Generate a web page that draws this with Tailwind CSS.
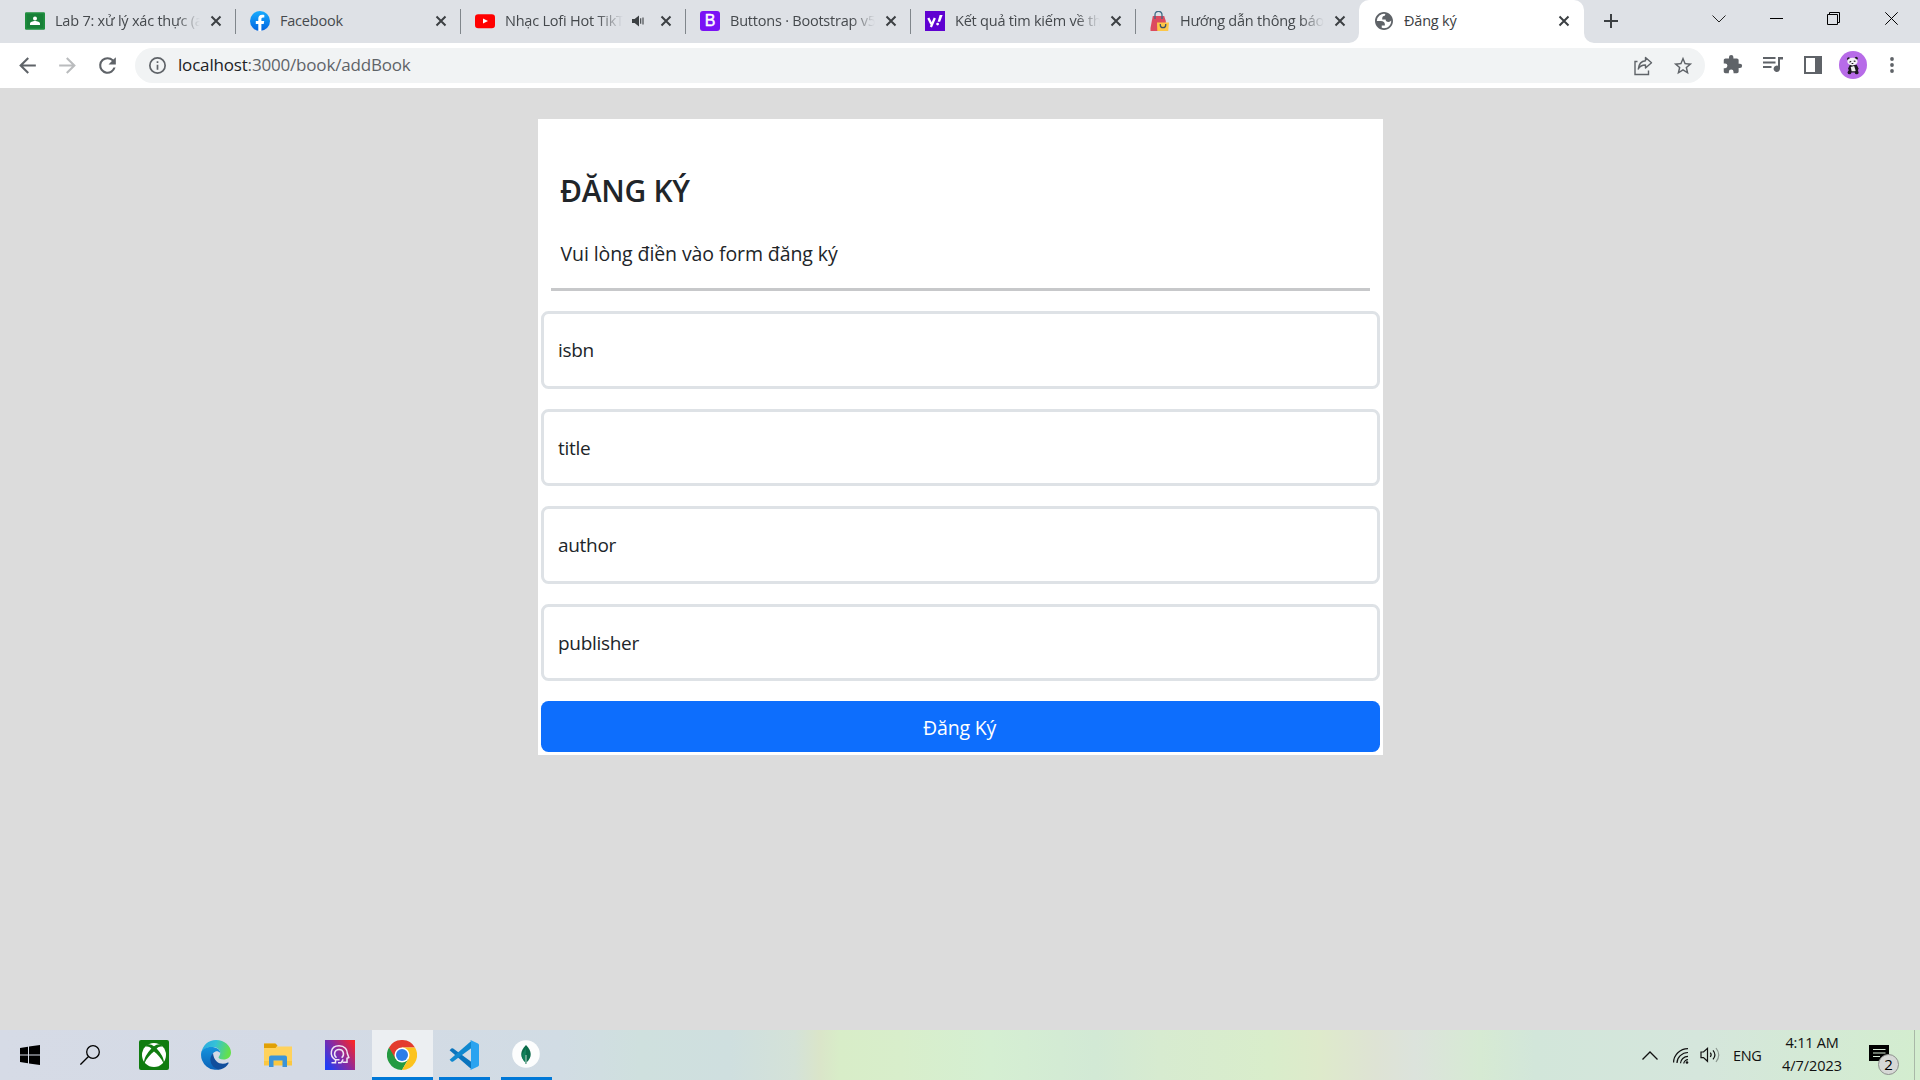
<!DOCTYPE html>
<html lang="vi">
<head>
<meta charset="utf-8">
<title>Đăng ký</title>
<script src="https://cdn.jsdelivr.net/npm/@tailwindcss/browser@4"></script>
</head>
<body class="w-[1920px] h-[1080px] overflow-hidden flex flex-col bg-[#dcdcdc] font-['Open_Sans','Noto_Sans',sans-serif]">

<svg class="hidden">
  <symbol id="x" viewBox="0 0 12 12"><path d="M1.5 1.5l9 9M10.5 1.5l-9 9" stroke="#3c4043" stroke-width="2" fill="none"/></symbol>
</svg>

<!-- Tab strip -->
<header class="h-[43px] shrink-0 bg-[#dee1e6] flex pl-2.5 text-[14.5px] leading-5 tracking-[-0.22px] text-[#45494d]">
  <div class="w-[225px] h-full flex items-center pb-px pl-[15px] pr-[16px] relative shrink-0">
    <svg class="w-5 h-5 shrink-0" viewBox="0 0 20 20"><rect y="1.2" width="20" height="17.6" rx="1.2" fill="#1e8e3e"/><rect x="1.8" y="3" width="16.4" height="14" fill="#188038"/><circle cx="10" cy="7.6" r="2" fill="#fff"/><path d="M5 14v-1.2c0-1.8 2.8-2.7 5-2.7s5 .9 5 2.7V14z" fill="#fff"/></svg>
    <span class="ml-2.5 mt-[-1px] flex-1 overflow-hidden whitespace-nowrap [mask-image:linear-gradient(to_right,black_84%,transparent)]">Lab 7: xử lý xác thực (a</span>
    <svg class="w-3 h-3 ml-2.5 mr-[-3px] shrink-0"><use href="#x"/></svg>
    <i class="absolute right-[-1px] top-[9px] w-px h-[25px] bg-[#80868b]"></i>
  </div>
  <div class="w-[225px] h-full flex items-center pb-px pl-[15px] pr-[16px] relative shrink-0">
    <svg class="w-5 h-5 shrink-0" viewBox="0 0 20 20"><defs><linearGradient id="fb" x2="0" y2="1"><stop stop-color="#18acfe"/><stop offset="1" stop-color="#0163e0"/></linearGradient></defs><circle cx="10" cy="10" r="10" fill="url(#fb)"/><path d="M13.7 12.9l.5-2.9h-2.8V8.1c0-.8.4-1.6 1.6-1.6h1.3V4s-1.1-.2-2.2-.2c-2.3 0-3.8 1.4-3.8 3.9V10H5.8v2.9h2.5v7a10 10 0 0 0 3.1 0v-7z" fill="#fff"/></svg>
    <span class="ml-2.5 mt-[-1px] flex-1 overflow-hidden whitespace-nowrap">Facebook</span>
    <svg class="w-3 h-3 ml-2.5 mr-[-3px] shrink-0"><use href="#x"/></svg>
    <i class="absolute right-[-1px] top-[9px] w-px h-[25px] bg-[#80868b]"></i>
  </div>
  <div class="w-[225px] h-full flex items-center pb-px pl-[15px] pr-[16px] relative shrink-0">
    <svg class="w-5 h-5 shrink-0" viewBox="0 0 20 20"><rect y="3.2" width="20" height="14" rx="3.2" fill="#f00"/><path d="M8 7.4v5.2l5-2.6z" fill="#fff"/></svg>
    <span class="ml-2.5 mt-[-1px] flex-1 overflow-hidden whitespace-nowrap [mask-image:linear-gradient(to_right,black_78%,transparent)]">Nhạc Lofi Hot TikT</span>
    <svg class="w-3.5 h-3 ml-2 shrink-0" viewBox="0 0 14 12"><path d="M1 4h2.600L8 .6v10.800L3.600 8H1z" fill="#3c4043"/><path d="M9.700 3.200v5.600M12 2.500v7" stroke="#3c4043" stroke-width="1.100"/></svg>
    <svg class="w-3 h-3 ml-[15px] mr-[-3px] shrink-0"><use href="#x"/></svg>
    <i class="absolute right-[-1px] top-[9px] w-px h-[25px] bg-[#80868b]"></i>
  </div>
  <div class="w-[225px] h-full flex items-center pb-px pl-[15px] pr-[16px] relative shrink-0">
    <span class="w-5 h-5 shrink-0 rounded-[3px] bg-[#7a12f5] text-white text-[16px] leading-5 text-center tracking-normal font-[Liberation_Sans,sans-serif] [-webkit-text-stroke:0.4px_white]">B</span>
    <span class="ml-2.5 mt-[-1px] flex-1 overflow-hidden whitespace-nowrap [mask-image:linear-gradient(to_right,black_84%,transparent)]">Buttons · Bootstrap v5</span>
    <svg class="w-3 h-3 ml-2.5 mr-[-3px] shrink-0"><use href="#x"/></svg>
    <i class="absolute right-[-1px] top-[9px] w-px h-[25px] bg-[#80868b]"></i>
  </div>
  <div class="w-[225px] h-full flex items-center pb-px pl-[15px] pr-[16px] relative shrink-0">
    <svg class="w-5 h-5 shrink-0" viewBox="0 0 20 20"><rect width="20" height="20" fill="#5f01d1"/><path d="M3.300 7l3 6M9.800 7L5.900 16" stroke="#fff" stroke-width="2.300" fill="none"/><path d="M12.700 10.800h2.500L17.600 4h-3z" fill="#fff"/><circle cx="12.600" cy="13.100" r="1.400" fill="#fff"/></svg>
    <span class="ml-2.5 mt-[-1px] flex-1 overflow-hidden whitespace-nowrap [mask-image:linear-gradient(to_right,black_84%,transparent)]">Kết quả tìm kiếm về th</span>
    <svg class="w-3 h-3 ml-2.5 mr-[-3px] shrink-0"><use href="#x"/></svg>
    <i class="absolute right-[-1px] top-[9px] w-px h-[25px] bg-[#80868b]"></i>
  </div>
  <div class="w-[224px] h-full flex items-center pb-px pl-[15px] pr-[16px] shrink-0">
    <svg class="w-5 h-5 shrink-0" viewBox="0 0 20 20"><path d="M2.800 5h11.400l1.600 5v10H.5v-3z" fill="#dc4a5f"/><path d="M5 8V3.800a3.500 3.500 0 0 1 7 0V8" stroke="#3f6b85" stroke-width="1.300" fill="none"/><path d="M7 11.500h12l-.8 8.500H7.300z" fill="#fdc748"/><path d="M10.300 13v1a2.700 2.700 0 0 0 5.400 0v-1" stroke="#3f5266" stroke-width="1.300" fill="none"/></svg>
    <span class="ml-2.5 mt-[-1px] flex-1 overflow-hidden whitespace-nowrap [mask-image:linear-gradient(to_right,black_84%,transparent)]">Hướng dẫn thông báo</span>
    <svg class="w-3 h-3 ml-2.5 mr-[-3px] shrink-0"><use href="#x"/></svg>
  </div>
  <div class="w-[225px] h-full flex items-center pb-px pl-[16px] pr-[17px] relative shrink-0 bg-white rounded-t-[10px] text-[#3c4043]">
    <svg class="absolute left-[-10px] bottom-0 w-2.5 h-2.5" viewBox="0 0 10 10"><path d="M10 0v10H0A10 10 0 0 0 10 0" fill="#fff"/></svg>
    <svg class="absolute right-[-10px] bottom-0 w-2.5 h-2.5" viewBox="0 0 10 10"><path d="M0 0v10h10A10 10 0 0 1 0 0" fill="#fff"/></svg>
    <svg class="w-[18px] h-[18px] shrink-0" viewBox="2 2 20 20"><path fill="#5f6368" fill-rule="evenodd" d="M12 2C6.480 2 2 6.480 2 12s4.480 10 10 10 10-4.480 10-10S17.520 2 12 2zM4 12h4.400c3.407.022 4.922 1.730 4.543 5.127H9.488v2.470a8.004 8.004 0 0 0 10.498-8.083C19.327 12.504 18.332 13 17 13c-2.137 0-3.206-.916-3.206-2.750h-3.748c-.274-2.728.683-4.092 2.870-4.092 0-.975.327-1.597.811-1.970A8.004 8.004 0 0 0 4 12z"/></svg>
    <span class="ml-[11px] mt-[-1px] flex-1 overflow-hidden whitespace-nowrap">Đăng ký</span>
    <svg class="w-3 h-3 ml-2.5 mr-[-3px] shrink-0"><use href="#x"/></svg>
  </div>
  <svg class="w-4 h-4 ml-[19px] mt-[13px] shrink-0" viewBox="0 0 16 16"><path d="M8 1v14M1 8h14" stroke="#3c4043" stroke-width="2"/></svg>
  <svg class="w-[14px] h-[8px] ml-[93px] mt-[15px] shrink-0" viewBox="0 0 14 8"><path d="M.5.5L7 7 13.500.5" stroke="#222" fill="none"/></svg>
  <svg class="w-[13px] h-px ml-[44px] mt-[18px] shrink-0"><rect width="13" height="1" fill="#000"/></svg>
  <svg class="w-[13px] h-[13px] ml-[44px] mt-3 shrink-0" viewBox="0 0 13 13"><path d="M.5 2.500h10v10H.5zM2.500 2.500v-2h10v10h-2" stroke="#000" fill="none"/></svg>
  <svg class="w-[13px] h-[13px] ml-[45px] mt-3 shrink-0" viewBox="0 0 13 13"><path d="M.3.3l12.400 12.400M12.700.3L.3 12.700" stroke="#000" fill="none"/></svg>
</header>

<!-- Toolbar -->
<nav class="h-[45px] shrink-0 bg-white flex items-center text-[#5f6368]">
  <svg class="w-[25px] h-[25px] ml-[15px] mt-[-1px] shrink-0" viewBox="0 0 24 24" fill="currentColor"><path d="M20 11H7.830l5.590-5.590L12 4l-8 8 8 8 1.410-1.410L7.830 13H20v-2z"/></svg>
  <svg class="w-[25px] h-[25px] ml-[15px] mt-[-1px] shrink-0" viewBox="0 0 24 24" fill="#babcbe"><path d="M12 4l-1.410 1.410L16.170 11H4v2h12.170l-5.580 5.590L12 20l8-8z"/></svg>
  <svg class="w-[25px] h-[25px] ml-[15px] mt-[-1px] shrink-0" viewBox="0 0 24 24" fill="currentColor"><path d="M17.650 6.350A7.958 7.958 0 0 0 12 4a8 8 0 1 0 7.730 10h-2.080A6 6 0 1 1 12 6c1.660 0 3.140.690 4.220 1.780L13 11h7V4l-2.350 2.350z"/></svg>
  <div class="w-[1570px] h-[35px] ml-[15px] rounded-full bg-[#f1f3f4] flex items-center pl-[14px] pr-[11px] shrink-0">
    <svg class="w-[17px] h-[17px] shrink-0" viewBox="2 2 20 20" fill="currentColor"><path d="M11 7h2v2h-2zm0 4h2v6h-2zm1-9a10 10 0 1 0 0 20 10 10 0 0 0 0-20zm0 18a8 8 0 1 1 0-16 8 8 0 0 1 0 16z"/></svg>
    <span class="ml-3 mt-[-1px] flex-1 text-[17px] leading-6 tracking-[-0.18px] whitespace-nowrap"><span class="text-[#202124]">localhost</span>:3000/book/addBook</span>
    <svg class="w-5 h-5 shrink-0" viewBox="0 0 20 20" fill="none" stroke="currentColor" stroke-width="1.400"><path d="M4.500 5.500H2v13h13.500v-4"/><path d="M12.500 1.500l6 5.300-6 5.300V9C8.500 9 6.500 10.500 5.300 13c.4-4.300 2.700-7.800 7.200-8.300z" stroke-linejoin="round"/></svg>
    <svg class="w-[22px] h-[22px] ml-[19px] shrink-0" viewBox="0 0 24 24" fill="currentColor"><path d="M22 9.240l-7.190-.620L12 2 9.190 8.630 2 9.240l5.460 4.730L5.820 21 12 17.270 18.180 21l-1.630-7.030L22 9.240zM12 15.400l-3.760 2.270 1-4.280-3.320-2.880 4.380-.380L12 6.100l1.710 4.040 4.380.380-3.320 2.880 1 4.280L12 15.400z"/></svg>
  </div>
  <svg class="w-[21px] h-[21px] ml-[17px] mt-[-2px] shrink-0" viewBox="0 0 24 24" fill="currentColor"><path d="M20.500 11H19V7c0-1.100-.9-2-2-2h-4V3.500a2.500 2.500 0 0 0-5 0V5H4c-1.100 0-1.990.9-1.990 2v3.800H3.500a2.700 2.700 0 0 1 0 5.400H2V20c0 1.100.9 2 2 2h3.800v-1.500a2.700 2.700 0 0 1 5.400 0V22H17c1.100 0 2-.9 2-2v-4h1.500a2.500 2.500 0 0 0 0-5z"/></svg>
  <svg class="w-[20px] h-[16px] ml-[20px] mt-[-2px] shrink-0" viewBox="0 0 20 16" fill="currentColor"><path d="M0 0h12.500v2H0zM0 4.500h12.500v2H0zM0 9h8.500v2H0zM15 0h5v2.500h-3v9.300a3.200 3.200 0 1 1-2-3z"/></svg>
  <svg class="w-[18px] h-[18px] ml-[21px] mt-[-1px] shrink-0" viewBox="0 0 18 18"><path d="M1 1h16v16H1z" fill="none" stroke="#5f6368" stroke-width="2"/><path d="M11 0h7v18h-7z" fill="#5f6368"/></svg>
  <svg class="w-7 h-7 ml-[17px] mt-[-1px] shrink-0" viewBox="0 0 28 28"><circle cx="14" cy="14" r="14" fill="#b76be8"/><g transform="translate(2.400 2.700) scale(.85)"><path d="M10 13h8l2 4-1 5H9l-1-5z" fill="#1d1a20"/><path d="M11 15.500l4-1 2 6h-5z" fill="#eee"/><circle cx="8.500" cy="6" r="1.800" fill="#1d1a20"/><circle cx="17.500" cy="5.300" r="1.800" fill="#1d1a20"/><ellipse cx="13" cy="9.300" rx="6" ry="4.600" fill="#f4f1f5"/><path d="M9.500 10l2-1M14.500 8.500l2 .5M12 11.500h2" stroke="#1d1a20" stroke-width="1.300"/><circle cx="9.500" cy="22" r="2.200" fill="#1d1a20"/><circle cx="18" cy="22" r="2.200" fill="#1d1a20"/></g></svg>
  <svg class="w-1 h-4 ml-[23px] mt-[-1px] shrink-0" viewBox="0 0 4 16" fill="currentColor"><circle cx="2" cy="2" r="1.900"/><circle cx="2" cy="8" r="1.900"/><circle cx="2" cy="14" r="1.900"/></svg>
</nav>

<!-- Page -->
<main class="h-[942px] shrink-0 flex justify-center items-start pt-[31px] text-[20px] leading-[30px] text-[#212529]">
  <form class="w-[845px] h-[636px] bg-white flex flex-col px-[3px] ml-px">
    <h1 class="ml-[19px] mt-[54px] text-[30px] leading-9 font-semibold tracking-[-0.3px]">ĐĂNG KÝ</h1>
    <p class="ml-[19.500px] mt-[30px] text-[19.500px] tracking-[-0.09px]">Vui lòng điền vào form đăng ký</p>
    <hr class="mx-2.5 mt-[19px] border-0 h-[3px] bg-[#c7c8ca] shrink-0">
    <div class="mt-5 flex flex-col gap-5 text-[19px] tracking-[-0.3px]">
      <div class="h-[77.500px] border-3 border-[#dee2e6] rounded-[7.500px] flex items-center pl-[14px] pt-px">isbn</div>
      <div class="h-[77.500px] border-3 border-[#dee2e6] rounded-[7.500px] flex items-center pl-[14px] pt-px">title</div>
      <div class="h-[77.500px] border-3 border-[#dee2e6] rounded-[7.500px] flex items-center pl-[14px] pt-px">author</div>
      <div class="h-[77.500px] border-3 border-[#dee2e6] rounded-[7.500px] flex items-center pl-[14px] pt-px">publisher</div>
    </div>
    <button type="button" class="mt-5 h-[51px] shrink-0 rounded-[7.500px] bg-[#0d6efd] text-white text-[19.500px] tracking-[-0.2px] pt-[3px] pr-0.5">Đăng Ký</button>
  </form>
</main>

<!-- Taskbar -->
<footer class="h-[50px] shrink-0 flex items-center text-[14.500px] leading-5 tracking-[-0.25px] text-[#111] bg-[linear-gradient(90deg,#d6dbe6_0px,#d4dae5_300px,#d1dce4_560px,#cfe0de_640px,#cfdfdf_730px,#d4e2d8_795px,#dae5c9_820px,#d8edc8_840px,#d8eecb_900px,#d5efd2_990px,#d2e9d5_1095px,#d7ebd0_1160px,#d9edcb_1270px,#deeacb_1320px,#dee3d4_1375px,#dce3dc_1415px,#d6ead3_1480px,#d2e6da_1535px,#d5e6dc_1700px,#d3edcf_1920px)]">
  <svg class="w-5 h-5 ml-5 shrink-0" viewBox="0 0 20 20"><path d="M0 2.900l8-1.100v7.700H0zM9 1.600L20 0v9.500H9zM0 10.500h8v7.700L0 17.100zM9 10.500h11V20L9 18.400z"/></svg>
  <svg class="w-5 h-5 ml-10 shrink-0" viewBox="0 0 20 20" fill="none" stroke="#000" stroke-width="1.300"><circle cx="13" cy="7" r="6.300"/><path d="M8.500 11.500L.4 19.600"/></svg>
  <svg class="w-[30px] h-[30px] ml-[39px] shrink-0" viewBox="0 0 30 30"><rect width="30" height="30" rx="2" fill="#107c10"/><circle cx="15" cy="15" r="12" fill="#fff"/><path d="M8 4.500c2.500-.8 5 .3 7 1.700 2-1.400 4.500-2.500 7-1.700l1.500 2.200c-2-.8-4.200 0-5.900 1.800 4.200 4.500 7.900 9.900 7.300 15.500C22.500 18.500 18.500 14 15 11.500 11.500 14 7.500 18.500 5.100 24c-.6-5.600 3.100-11 7.300-15.500C10.700 6.700 8.500 5.900 6.500 6.700z" fill="#107c10"/></svg>
  <svg class="w-[30px] h-[30px] ml-8 shrink-0" viewBox="0 0 30 30"><defs><linearGradient id="e1" x2="1" y2=".2"><stop stop-color="#2aa6e0"/><stop offset=".5" stop-color="#35c1d8"/><stop offset="1" stop-color="#64e04c"/></linearGradient><linearGradient id="e2" x2="0" y2="1"><stop stop-color="#1593dd"/><stop offset="1" stop-color="#0b62b8"/></linearGradient></defs><path d="M.3 13C1.500 5.300 7.500 0 15 0c8.500 0 15 6 15 12.500 0 4.500-3.500 7-7.500 7-3.600 0-5-1.200-5-2.200 0-.8 1.800-1.800 1.800-4.600C19.300 9 15.500 7 11 7 5.500 7 1.500 10 .3 13z" fill="url(#e1)"/><path d="M.2 12.700C1 9.500 5 7 10 7c5.500 0 9.300 2.600 9.300 6-1.200-1.300-3-2-4.800-1.500-3 1-4.500 4.500-4 8 .8 5 5 9 9.500 9.500A15 15 0 0 1 .2 12.700z" fill="url(#e2)"/><path d="M12 13.200c-2.500 2.300-3.300 6.300-2 9.800 1.600 4.300 6 7 10 6.200 3.500-1 6-3.200 7.600-6 .3-.7-.2-1-.8-.7-5.500 2.800-13.800 1-14.800-9.300z" fill="#114e9c"/></svg>
  <svg class="w-7 h-6 ml-[33px] mt-[-1px] shrink-0" viewBox="0 0 28 24"><path d="M0 1.500Q0 .5 1 .5h10l2.500 3H28V22H0z" fill="#ffd25c"/><path d="M0 .5h11.500L13.500 2.500 11.500 5H0z" fill="#e0a006"/><path d="M0 18h28v4.500H0z" fill="#fbc740"/><path d="M5 24V14.500Q5 12.500 7 12.500h14q2 0 2 2V24h-4.500v-6.500h-9V24z" fill="#3b94d9"/></svg>
  <svg class="w-[30px] h-[30px] ml-[33px] shrink-0" viewBox="0 0 30 30"><defs><linearGradient id="p" x1="0" y1=".8" x2="1" y2=".1"><stop stop-color="#1f3df5"/><stop offset=".5" stop-color="#8a2aa0"/><stop offset="1" stop-color="#fb2626"/></linearGradient></defs><rect width="30" height="30" fill="url(#p)"/><path d="M6.500 22.800h4v-3C4 16 5 5.800 14 5.800c6 0 8.300 4 8.300 7.500l1.500 4.200-1.800.8v4h-4.500M11.500 17.800c-3.500-3-2-8.300 2.500-8.300s6 5 2.700 8.300M10.500 19.800h4M13 22.800h3l2.200-3.500" fill="none" stroke="#f0e6f5" stroke-width="1.500"/></svg>
  <div class="w-[61px] h-full ml-[17px] bg-[#eceff2] border-b-3 border-[#0078d7] pt-2.5 pl-[15px] shrink-0">
    <svg class="w-[30px] h-[30px]" viewBox="0 0 48 48"><path d="M3.200 12A24 24 0 0 0 24 48l10.400-18H24z" fill="#249a41"/><path d="M3.200 12L13.600 30 24 24V12H44.800A24 24 0 0 0 3.200 12z" fill="#e33b2e"/><path d="M34.400 30L24 48A24 24 0 0 0 44.800 12H24z" fill="#fcc31e"/><circle cx="24" cy="24" r="12" fill="#fff"/><circle cx="24" cy="24" r="9.600" fill="#2b7de9"/></svg>
  </div>
  <div class="w-[51px] h-full ml-1.5 border-b-3 border-[#0078d7] pt-2.5 pl-2.5 shrink-0">
    <svg class="w-[30px] h-[30px]" viewBox="0 0 30 30"><path d="M.6 10.200l1.800-1.700q.8-.7 1.800 0L22.500 22v7.300z" fill="#0a74bd"/><path d="M.6 19.800l1.800 1.700q.8.700 1.800 0L22.500 8V.7z" fill="#1088cf"/><path d="M22 .2L29 3.500q1 .6 1 1.500v20q0 .9-1 1.500L22 29.800q-1 .2-1.500-.4 1.500.5 1.500-1V1.600q0-1.500-1.500-1 .5-.6 1.500-.4z" fill="#2ba3f0"/></svg>
  </div>
  <div class="w-[51px] h-full ml-[11px] border-b-3 border-[#0078d7] pt-2.5 pl-[11px] shrink-0">
    <svg class="w-7 h-7" viewBox="0 0 28 28"><circle cx="14" cy="14" r="13.800" fill="#fcfdfd"/><path d="M14 5c6 6 6.500 12 .5 17.500V24h-1v-1.500C7.500 17 8 11 14 5z" fill="#0b6b4a"/><path d="M14 8v16h-.5v-1.500C11 20 10 17 10.200 14z" fill="#11805a"/><path d="M14 15v9" stroke="#b9d3c8"/></svg>
  </div>
  <svg class="w-4 h-[9px] ml-[1090px] shrink-0" viewBox="0 0 16 9"><path d="M.5 8.500L8 1l7.500 7.500" stroke="#111" stroke-width="1.300" fill="none"/></svg>
  <svg class="w-4 h-4 ml-[15px] mt-px shrink-0" viewBox="0 0 16 16" fill="none" stroke="#111" stroke-width="1.200"><path d="M.6 14.500C.6 7 7 .6 15 .6M4 15C4 9.500 9 4.500 15 4.500M7.500 15.300c0-3.500 3.500-7 7.500-7M10.800 15.500c0-2 2-3.800 4.200-3.800"/><circle cx="14" cy="14.500" r="1.300" fill="#111" stroke="none"/></svg>
  <svg class="w-[21px] h-[18px] ml-[11px] shrink-0" viewBox="0 0 21 18" fill="none" stroke="#111" stroke-width="1.200"><path d="M1 6h2.500L7.500 2.300v13L3.500 11.600H1z"/><path d="M10.300 6.700q1.700 2.100 0 4.300M13 4.300q3.800 4.500 0 9"/><path d="M16 2q5.500 7 0 14" stroke="#8a968e"/></svg>
  <span class="ml-[12px] w-7 shrink-0 whitespace-nowrap tracking-[-0.4px] mt-0.5">ENG</span>
  <div class="ml-[21px] w-[60px] shrink-0 flex flex-col gap-[3px] text-center whitespace-nowrap mt-[-1px]"><span>4:11 AM</span><span class="tracking-[-0.05px]">4/7/2023</span></div>
  <div class="relative ml-[27px] w-5 h-5 shrink-0">
    <svg class="w-5 h-5" viewBox="0 0 20 20"><path d="M0 0h20v16h-5v4l-4-4H0z"/><path d="M4 4.500h12.500M4 8h12.500M4 11.500h7" stroke="#d6e9d6" stroke-width="1.200"/></svg>
    <span class="absolute left-[9px] top-[9px] w-[21px] h-[21px] rounded-full border border-[#8d8f8d] bg-[#d6d8d6] text-[15px] leading-[19px] text-center tracking-normal font-medium text-black">2</span>
  </div>
  <i class="ml-auto mr-[5px] w-px h-full bg-[#a9b8a8]"></i>
</footer>
</body>
</html>
